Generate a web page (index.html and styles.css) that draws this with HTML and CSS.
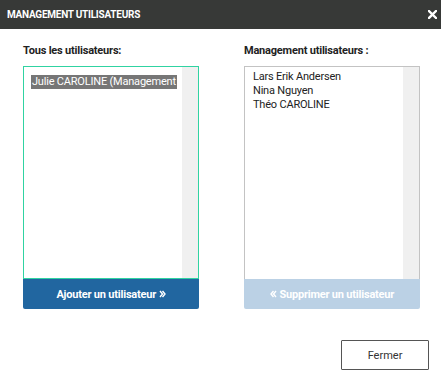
FILE: index.html
```html
<!DOCTYPE html>
<html>
<head>
<meta charset="utf-8">
<link rel="stylesheet" href="styles.css">
</head>
<body>
<div class="dialog">
  <div class="header">
    <span class="title">MANAGEMENT UTILISATEURS</span>
    <svg class="close" width="9" height="9" viewBox="0 0 9 9"><path d="M1 1 L8 8 M8 1 L1 8" stroke="#ffffff" stroke-width="2.4" stroke-linecap="square"/></svg>
  </div>
  <div class="content">
    <div class="column">
      <div class="label">Tous les utilisateurs:</div>
      <div class="listbox active">
        <div class="items">
          <div class="item selected">Julie CAROLINE (Management</div>
        </div>
        <div class="scrollbar"></div>
      </div>
      <button class="btn primary">Ajouter un utilisateur <svg class="chev" width="7" height="8" viewBox="0 0 7 8"><path d="M1 1 L3.5 4 L1 7 M3.5 1 L6 4 L3.5 7" fill="none" stroke="#ffffff" stroke-width="1.4"/></svg></button>
    </div>
    <div class="column">
      <div class="label">Management utilisateurs :</div>
      <div class="listbox">
        <div class="items">
          <div class="item">Lars Erik Andersen</div>
          <div class="item">Nina Nguyen</div>
          <div class="item">Théo CAROLINE</div>
        </div>
        <div class="scrollbar"></div>
      </div>
      <button class="btn disabled"><svg class="chev" width="7" height="8" viewBox="0 0 7 8"><path d="M6 1 L3.5 4 L6 7 M3.5 1 L1 4 L3.5 7" fill="none" stroke="#ffffff" stroke-width="1.4"/></svg> Supprimer un utilisateur</button>
    </div>
  </div>
  <div class="footer">
    <button class="close-btn">Fermer</button>
  </div>
</div>
</body>
</html>
```
FILE: styles.css
```css
html, body {
  margin: 0;
  padding: 0;
  background: #ffffff;
  font-family: Roboto, "Liberation Sans", sans-serif;
}
.dialog {
  width: 441px;
  height: 378px;
  display: flex;
  flex-direction: column;
}
.header {
  height: 29px;
  background: #373937;
  display: flex;
  align-items: center;
  justify-content: space-between;
  padding: 0 4px 0 7px;
}
.title {
  color: #ffffff;
  font-weight: bold;
  font-size: 10px;
  letter-spacing: -0.25px;
}
.close {
  display: block;
}
.content {
  display: flex;
  gap: 45px;
  padding: 15px 0 0 23px;
}
.column {
  width: 176px;
  display: flex;
  flex-direction: column;
}
.label {
  font-size: 11px;
  font-weight: bold;
  color: #222;
  height: 22px;
  letter-spacing: -0.2px;
}
.listbox {
  height: 213px;
  box-sizing: border-box;
  border: 1px solid #c3c3c3;
  border-bottom: none;
  display: flex;
}
.listbox.active {
  border-color: #30d3a2;
  border-bottom: 1px solid #30d3a2;
}
.items {
  flex: 1;
  padding: 3px 0 0 8px;
  overflow: hidden;
}
.item {
  font-size: 11px;
  color: #222;
  line-height: 14px;
  white-space: nowrap;
  letter-spacing: -0.2px;
}
.item.selected {
  background: #767676;
  color: #ffffff;
  display: inline-block;
  padding: 0 1px;
  margin-left: -1px;
}
.scrollbar {
  width: 16px;
  background: #f0f0f0;
}
.btn {
  height: 30px;
  border: none;
  border-radius: 0 0 2px 2px;
  color: #ffffff;
  font-family: Roboto, "Liberation Sans", sans-serif;
  font-size: 11px;
  font-weight: bold;
  letter-spacing: -0.2px;
  padding: 0;
}
.chev {
  vertical-align: -0.5px;
}
.btn.primary {
  background: #2166a0;
}
.btn.disabled {
  background: #bbd1e5;
}
.footer {
  display: flex;
  justify-content: flex-end;
  padding: 31px 12px 0 0;
}
.close-btn {
  width: 88px;
  height: 30px;
  background: #ffffff;
  border: 1px solid #555555;
  border-radius: 1px;
  font-family: Roboto, "Liberation Sans", sans-serif;
  font-size: 11px;
  color: #333;
  padding: 0;
}
```
